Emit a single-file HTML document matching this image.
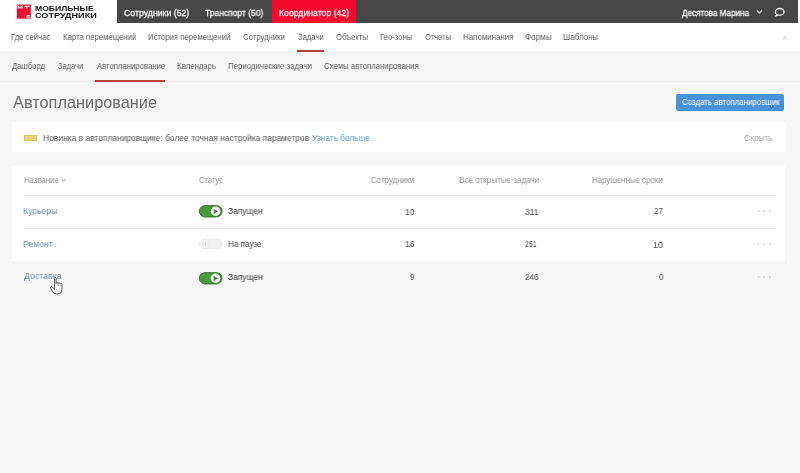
<!DOCTYPE html>
<html><head><meta charset="utf-8">
<style>
*{margin:0;padding:0;box-sizing:border-box}
html,body{width:800px;height:473px;overflow:hidden;background:#f6f6f6;font-family:"Liberation Sans",sans-serif;color:#333}
.a{position:absolute}
.tx{position:absolute;white-space:nowrap;transform-origin:0 0;will-change:transform}
</style></head><body>
<div class="a" style="left:0;top:0;width:800px;height:23px;background:#fff"></div>
<div class="a" style="left:117px;top:0;width:681px;height:23px;background:#474747"></div>
<div class="a" style="left:272px;top:0;width:84px;height:23px;background:#f5092e"></div>
<!-- logo -->
<svg class="a" style="left:0;top:0" width="40" height="23" viewBox="0 0 40 23">
 <rect x="16.8" y="4.6" width="14" height="14" fill="#ea0f30"/>
 <path d="M18.1 8.6V6.2L20.1 8L22.1 6.2V8.6" fill="none" stroke="#fbd6dc" stroke-width="1.2"/>
 <path d="M24.4 6.4H29.5M26.95 6.4V8.6" fill="none" stroke="#fbd6dc" stroke-width="1.2"/>
 <path d="M29.8 15.6H27.9Q26.8 15.6 26.8 16.45Q26.8 17.3 27.9 17.3H29.8" fill="none" stroke="#fbd6dc" stroke-width="1.2"/>
</svg>
<!-- chevron + chat -->
<svg class="a" style="left:740px;top:0" width="60" height="23" viewBox="740 0 60 23">
 <path d="M756.9 10.5L759.4 13L761.9 10.5" fill="none" stroke="#d0d0d0" stroke-width="1.3"/>
 <ellipse cx="779.7" cy="11.9" rx="4.3" ry="3.4" fill="none" stroke="#ececec" stroke-width="1.4"/>
 <path d="M776.6 14.2L775.3 16.4L778.2 15.2" fill="#f0f0f0" stroke="#f0f0f0" stroke-width="0.6"/>
</svg>
<div class="a" style="left:0;top:23px;width:800px;height:28px;background:#fff"></div>
<svg class="a" style="left:778px;top:30px" width="14" height="14" viewBox="0 0 14 14">
 <path d="M4 9.5L7 5L10 9.5Z" fill="#e9e9e9"/>
</svg>
<div class="a" style="left:297px;top:50px;width:27px;height:2px;background:#a8403f"></div>
<div class="a" style="left:0;top:81px;width:800px;height:1px;background:#eeeeee"></div>
<div class="a" style="left:95px;top:80px;width:70px;height:2px;background:#b8403f"></div>
<div class="a" style="left:676px;top:94px;width:108px;height:17px;background:#4a92dc;border-radius:2px"></div>
<div class="a" style="left:12px;top:122px;width:774px;height:30px;background:#fff"></div>
<div class="a" style="left:24px;top:134.5px;width:13px;height:6px;background:#f0d27a;border:0.5px solid #e2c264"></div>
<div class="a" style="left:12px;top:166px;width:773px;height:95px;background:#fff"></div>
<div class="a" style="left:24px;top:195px;width:752px;height:1px;background:#f0f0f0"></div>
<div class="a" style="left:24px;top:228px;width:752px;height:1px;background:#f0f0f0"></div>
<svg class="a" style="left:0;top:160px" width="800" height="150" viewBox="0 160 800 150">
 <!-- sort chevron -->
 <path d="M61.7 179.2L63.7 181.3L65.7 179.2" fill="none" stroke="#aaa" stroke-width="1.1"/>
 <!-- toggle on row1 -->
 <rect x="199.3" y="205.6" width="22.8" height="11.4" rx="5.7" fill="#47993d" stroke="#3b6a3b" stroke-width="0.9"/>
 <circle cx="215.5" cy="211.3" r="4.7" fill="#f2fcf0"/>
 <path d="M213.7 208.9L218.1 211.3L213.7 213.7Z" fill="#5a735a"/>
 <!-- toggle off row2 -->
 <rect x="199.6" y="238.9" width="23.2" height="10.4" rx="5.2" fill="#efefef"/>
 <circle cx="204.2" cy="244.1" r="4.6" fill="#fdfdfd" stroke="#e2e2e2" stroke-width="0.6"/>
 <path d="M202.8 241.4V246.8M205.6 241.4V246.8" stroke="#d2d2d2" stroke-width="0.9"/>
 <!-- toggle on row3 -->
 <rect x="199.3" y="272.6" width="22.8" height="11.4" rx="5.7" fill="#47993d" stroke="#3b6a3b" stroke-width="0.9"/>
 <circle cx="215.5" cy="278.3" r="4.7" fill="#f2fcf0"/>
 <path d="M213.7 275.9L218.1 278.3L213.7 280.7Z" fill="#5a735a"/>
 <!-- dots -->
 <g fill="#d2d2d2">
  <circle cx="758.5" cy="211.2" r="0.9"/><circle cx="764.1" cy="211.2" r="0.9"/><circle cx="769.7" cy="211.2" r="0.9"/>
  <circle cx="758.5" cy="244.3" r="0.9"/><circle cx="764.1" cy="244.3" r="0.9"/><circle cx="769.7" cy="244.3" r="0.9"/>
  <circle cx="758.5" cy="277.2" r="0.9"/><circle cx="764.1" cy="277.2" r="0.9"/><circle cx="769.7" cy="277.2" r="0.9"/>
 </g>
</svg>
<div class="tx" style="left:34.97px;top:6.00px;font-size:6.8px;line-height:6.8px;color:#151515;transform:scaleX(1.2634);font-weight:bold">МОБИЛЬНЫЕ</div>
<div class="tx" style="left:35.27px;top:13.00px;font-size:6.8px;line-height:6.8px;color:#151515;transform:scaleX(1.3363);font-weight:bold">СОТРУДНИКИ</div>
<div class="tx" style="left:123.50px;top:9.00px;font-size:8.7px;line-height:8.7px;color:#f2f2f2;transform:scaleX(1.0051);-webkit-text-stroke:0.3px #f2f2f2">Сотрудники (52)</div>
<div class="tx" style="left:204.86px;top:9.00px;font-size:8.7px;line-height:8.7px;color:#f2f2f2;transform:scaleX(0.9766);-webkit-text-stroke:0.3px #f2f2f2">Транспорт (50)</div>
<div class="tx" style="left:278.50px;top:9.00px;font-size:8.7px;line-height:8.7px;color:#ffe0e4;transform:scaleX(0.9982);-webkit-text-stroke:0.3px #ffe0e4">Координатор (42)</div>
<div class="tx" style="left:682.08px;top:9.00px;font-size:8.7px;line-height:8.7px;color:#f2f2f2;transform:scaleX(0.9340);-webkit-text-stroke:0.3px #f2f2f2">Десятова Марина</div>
<div class="tx" style="left:11.46px;top:33.00px;font-size:9px;line-height:9px;color:#5e5e5e;transform:scaleX(0.8581)">Где сейчас</div>
<div class="tx" style="left:62.65px;top:33.00px;font-size:9px;line-height:9px;color:#5e5e5e;transform:scaleX(0.8634)">Карта перемещений</div>
<div class="tx" style="left:148.10px;top:33.00px;font-size:9px;line-height:9px;color:#5e5e5e;transform:scaleX(0.8609)">История перемещений</div>
<div class="tx" style="left:243.07px;top:33.00px;font-size:9px;line-height:9px;color:#5e5e5e;transform:scaleX(0.8609)">Сотрудники</div>
<div class="tx" style="left:297.68px;top:33.00px;font-size:9px;line-height:9px;color:#5e5e5e;transform:scaleX(0.8462)">Задачи</div>
<div class="tx" style="left:335.68px;top:33.00px;font-size:9px;line-height:9px;color:#5e5e5e;transform:scaleX(0.8581)">Объекты</div>
<div class="tx" style="left:379.86px;top:33.00px;font-size:9px;line-height:9px;color:#5e5e5e;transform:scaleX(0.8522)">Гео-зоны</div>
<div class="tx" style="left:424.69px;top:33.00px;font-size:9px;line-height:9px;color:#5e5e5e;transform:scaleX(0.8382)">Отчеты</div>
<div class="tx" style="left:462.84px;top:33.00px;font-size:9px;line-height:9px;color:#5e5e5e;transform:scaleX(0.8795)">Напоминания</div>
<div class="tx" style="left:525.05px;top:33.00px;font-size:9px;line-height:9px;color:#5e5e5e;transform:scaleX(0.9075)">Формы</div>
<div class="tx" style="left:563.09px;top:33.00px;font-size:9px;line-height:9px;color:#5e5e5e;transform:scaleX(0.8831)">Шаблоны</div>
<div class="tx" style="left:12.14px;top:62.00px;font-size:9px;line-height:9px;color:#5e5e5e;transform:scaleX(0.8562)">Дашборд</div>
<div class="tx" style="left:58.19px;top:62.00px;font-size:9px;line-height:9px;color:#5e5e5e;transform:scaleX(0.8291)">Задачи</div>
<div class="tx" style="left:96.75px;top:62.00px;font-size:9px;line-height:9px;color:#5e5e5e;transform:scaleX(0.8576)">Автопланирование</div>
<div class="tx" style="left:176.86px;top:62.00px;font-size:9px;line-height:9px;color:#5e5e5e;transform:scaleX(0.8588)">Календарь</div>
<div class="tx" style="left:228.35px;top:62.00px;font-size:9px;line-height:9px;color:#5e5e5e;transform:scaleX(0.8707)">Периодические задачи</div>
<div class="tx" style="left:324.07px;top:62.00px;font-size:9px;line-height:9px;color:#5e5e5e;transform:scaleX(0.8661)">Схемы автопланирования</div>
<div class="tx" style="left:12.90px;top:95.00px;font-size:15.9px;line-height:15.9px;color:#6a6a6a;transform:scaleX(1.0270)">Автопланирование</div>
<div class="tx" style="left:681.85px;top:98.00px;font-size:8.5px;line-height:8.5px;color:#fff;transform:scaleX(0.9267)">Создать автопланировщик</div>
<div class="tx" style="left:43.25px;top:134.00px;font-size:8.5px;line-height:8.5px;color:#555;transform:scaleX(0.9933)">Новинка в автопланировщике: более точная настройка параметров</div>
<div class="tx" style="left:312.05px;top:134.00px;font-size:8.5px;line-height:8.5px;color:#5b9bd0;transform:scaleX(0.9829)">Узнать больше</div>
<div class="tx" style="left:744.01px;top:134.00px;font-size:8.6px;line-height:8.6px;color:#aaa;transform:scaleX(0.9825)">Скрыть</div>
<div class="tx" style="left:23.91px;top:176.00px;font-size:8.4px;line-height:8.4px;color:#939393;transform:scaleX(0.9265)">Название</div>
<div class="tx" style="left:198.91px;top:176.00px;font-size:8.4px;line-height:8.4px;color:#939393;transform:scaleX(0.8986)">Статус</div>
<div class="tx" style="left:371.39px;top:176.00px;font-size:8.4px;line-height:8.4px;color:#939393;transform:scaleX(0.9499)">Сотрудники</div>
<div class="tx" style="left:458.53px;top:176.00px;font-size:8.4px;line-height:8.4px;color:#939393;transform:scaleX(0.9649)">Все открытые задачи</div>
<div class="tx" style="left:591.99px;top:176.00px;font-size:8.4px;line-height:8.4px;color:#939393;transform:scaleX(0.9453)">Нарушенные сроки</div>
<div class="tx" style="left:23.18px;top:207.00px;font-size:9px;line-height:9px;color:#6790bd;transform:scaleX(0.9623)">Курьеры</div>
<div class="tx" style="left:23.17px;top:240.00px;font-size:9px;line-height:9px;color:#6790bd;transform:scaleX(0.9700)">Ремонт</div>
<div class="tx" style="left:23.78px;top:272.00px;font-size:9px;line-height:9px;color:#6790bd;transform:scaleX(0.9740)">Доставка</div>
<div class="tx" style="left:228.13px;top:207.00px;font-size:8.6px;line-height:8.6px;color:#3a3a3a;transform:scaleX(0.9797)">Запущен</div>
<div class="tx" style="left:228.39px;top:240.00px;font-size:8.6px;line-height:8.6px;color:#3a3a3a;transform:scaleX(0.9449)">На паузе</div>
<div class="tx" style="left:228.13px;top:273.00px;font-size:8.6px;line-height:8.6px;color:#3a3a3a;transform:scaleX(0.9797)">Запущен</div>
<div class="tx" style="left:404.87px;top:207.00px;font-size:9.6px;line-height:9.6px;color:#4e4e4e;transform:scaleX(0.9053)">10</div>
<div class="tx" style="left:404.87px;top:239.00px;font-size:9.6px;line-height:9.6px;color:#4e4e4e;transform:scaleX(0.9053)">16</div>
<div class="tx" style="left:410.03px;top:272.00px;font-size:9.6px;line-height:9.6px;color:#4e4e4e;transform:scaleX(0.8457)">9</div>
<div class="tx" style="left:525.32px;top:207.00px;font-size:9.6px;line-height:9.6px;color:#4e4e4e;transform:scaleX(0.8828)">311</div>
<div class="tx" style="left:525.45px;top:240.00px;font-size:8.8px;line-height:8.8px;color:#4e4e4e;transform:scaleX(0.7927)">251</div>
<div class="tx" style="left:525.23px;top:272.00px;font-size:9.6px;line-height:9.6px;color:#4e4e4e;transform:scaleX(0.8463)">246</div>
<div class="tx" style="left:654.19px;top:207.00px;font-size:8.8px;line-height:8.8px;color:#4e4e4e;transform:scaleX(0.9127)">27</div>
<div class="tx" style="left:653.45px;top:241.00px;font-size:9px;line-height:9px;color:#4e4e4e;transform:scaleX(0.9667)">10</div>
<div class="tx" style="left:658.61px;top:273.00px;font-size:9px;line-height:9px;color:#4e4e4e;transform:scaleX(0.8941)">0</div>
<svg class="a" style="left:50px;top:277px" width="14" height="19" viewBox="0 0 14 19">
 <path d="M4.5 1.5Q4.5 0.5 5.3 0.5Q6.1 0.5 6.1 1.5L6.1 6.5Q6.1 5.5 7.1 5.5Q8.1 5.5 8.1 6.5Q8.1 5.8 9.1 5.8Q10.1 5.8 10.1 6.8Q10.1 6.4 11 6.4Q12 6.4 12 7.4L12 12Q12 17 7.5 17L6.5 17Q4 17 2.5 14.5L0.6 11Q0.2 10 1 9.6Q1.8 9.3 2.6 10.2L4.5 12.5Z" fill="#fff" stroke="#4a4a4a" stroke-width="0.9"/>
 <path d="M8.1 6.6V9.2M10.1 6.9V9.2" stroke="#6a6a6a" stroke-width="0.6"/>
</svg>
</body></html>
